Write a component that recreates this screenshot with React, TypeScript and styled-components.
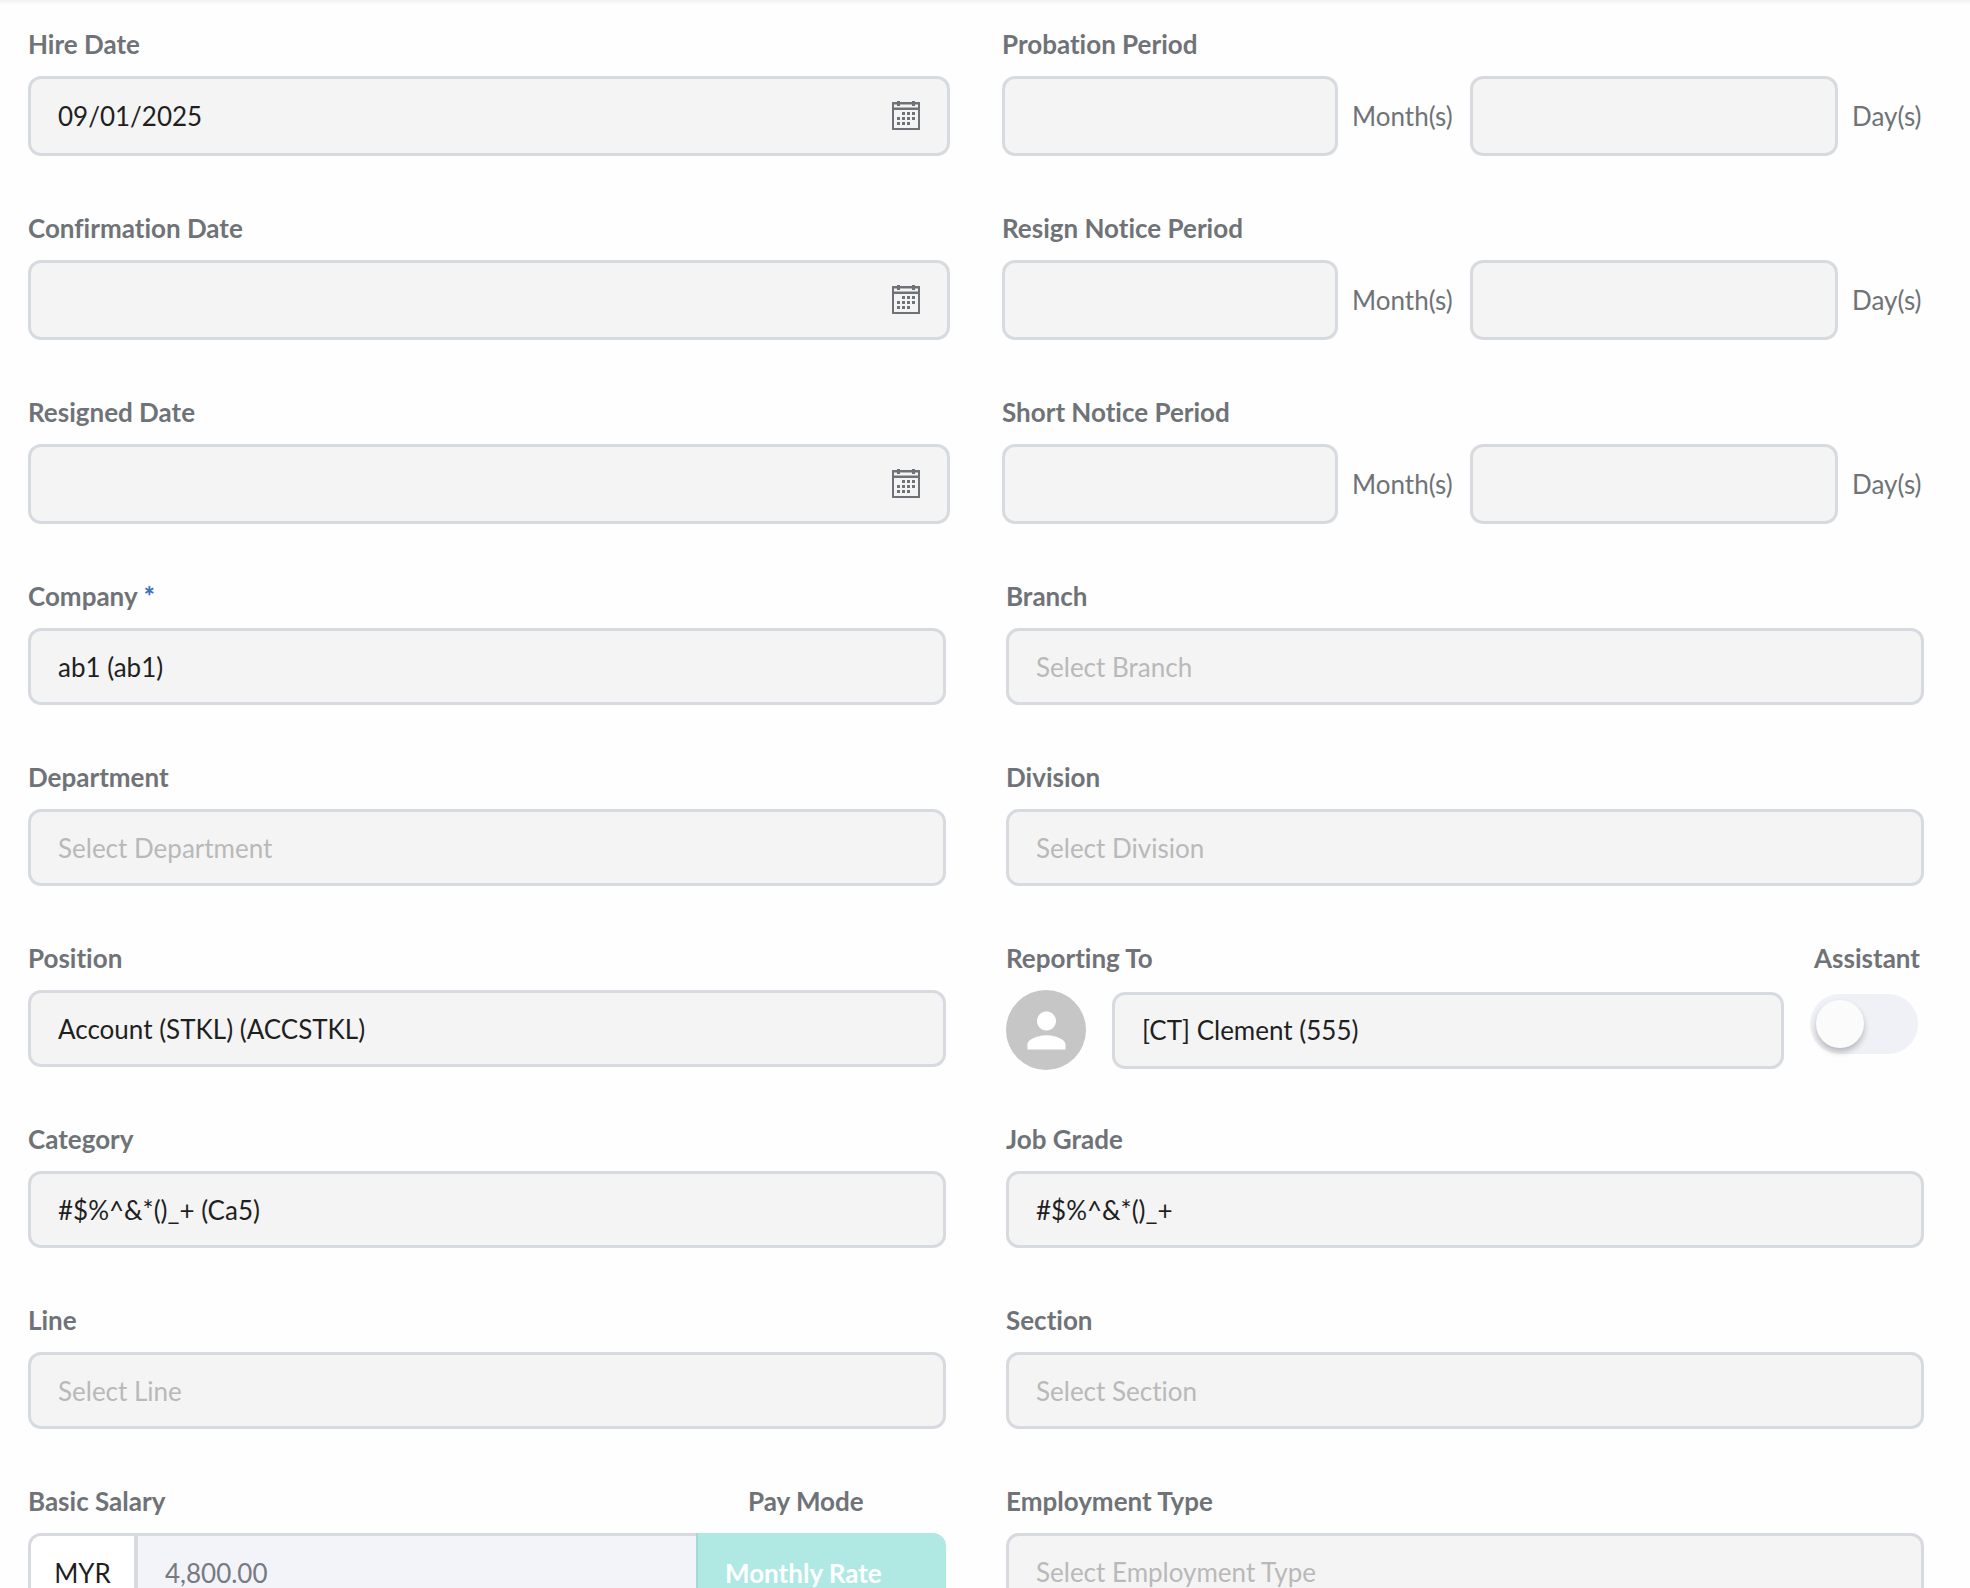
import React, { useId } from "react";
import styled, { createGlobalStyle } from "styled-components";

const GlobalStyle = createGlobalStyle`
  *, *::before, *::after { box-sizing: border-box; }
  body {
    margin: 0;
    background: #fefefe;
    font-family: Lato, "Liberation Sans", sans-serif;
    font-size: 26px;
    line-height: 32px;
    font-variant-ligatures: no-common-ligatures;
  }
  input, select, button { font: inherit; font-variant-ligatures: inherit; margin: 0; }
`;

const border = "3px solid #d7dbdf";

const Panel = styled.main`
  height: 100vh;
  overflow-y: auto;
  scrollbar-width: none;
  padding: 28px 46px 40px 28px;
  background: linear-gradient(#f1f1f1, #fefefe 5px);
`;

const FieldGrid = styled.div<{ $gap: number }>`
  display: grid;
  grid-template-columns: repeat(2, minmax(0, 1fr));
  column-gap: ${(p) => p.$gap}px;
`;

const Field = styled.div`
  min-width: 0;
  padding-bottom: 56px;
`;

const Label = styled.label`
  display: block;
  height: 48px;
  color: #6f7377;
  font-weight: 700;
  white-space: nowrap;
`;

const Required = styled.span`
  color: #3d70bf;
  font-weight: 900;
`;

const DateBox = styled.div`
  display: flex;
  align-items: center;
  height: 80px;
  padding-right: 27px;
  border: ${border};
  border-radius: 13px;
  background: #f4f4f4;
`;

const DateInput = styled.input`
  flex: 1;
  min-width: 0;
  height: 100%;
  padding: 0 27px;
  border: 0;
  outline: 0;
  background: transparent;
  color: #1f1f1f;
`;

const IconButton = styled.button`
  display: flex;
  padding: 0;
  border: 0;
  background: transparent;
  color: #6f7377;
`;

const PeriodRow = styled.div`
  display: grid;
  grid-template-columns: minmax(0, 21fr) 104px minmax(0, 23fr) 72px;
  column-gap: 14px;
  align-items: center;
`;

const PeriodInput = styled.input`
  width: 100%;
  height: 80px;
  padding: 0 27px;
  border: ${border};
  border-radius: 13px;
  outline: 0;
  background: #f4f4f4;
  color: #1f1f1f;
`;

const Unit = styled.span`
  color: #6f7377;
  white-space: nowrap;
`;

const Select = styled.select<{ $empty?: boolean }>`
  display: block;
  appearance: none;
  width: 100%;
  height: 77px;
  padding: 0 27px;
  border: ${border};
  border-radius: 13px;
  outline: 0;
  background: #f4f4f4;
  color: ${(p) => (p.$empty ? "#b9b9b9" : "#1f1f1f")};
`;

const ReportingGrid = styled.div`
  display: grid;
  grid-template-columns: 80px minmax(0, 1fr) 114px;
  column-gap: 26px;
  align-items: center;
  margin-bottom: -3px;
`;

const ReportingLabel = styled(Label)`
  grid-column: 1 / 3;
`;

const AssistantLabel = styled(Label)`
  text-align: center;
`;

const Avatar = styled.div`
  display: grid;
  place-items: center;
  width: 80px;
  height: 80px;
  border-radius: 50%;
  background: #c6c6c6;
  color: #fff;
`;

const Switch = styled.input`
  appearance: none;
  align-self: start;
  display: flex;
  align-items: center;
  width: 108px;
  height: 60px;
  margin: 4px 0 0;
  padding: 6px;
  border-radius: 30px;
  background: #f0f1f6;

  &::before {
    content: "";
    width: 48px;
    height: 48px;
    border-radius: 50%;
    background: #fbfbfb;
    box-shadow: 0 4px 6px rgba(0, 0, 0, 0.24);
  }

  &:checked { justify-content: flex-end; background: #b0e8e4; }
`;

const SalaryGrid = styled.div`
  display: grid;
  grid-template-columns: minmax(0, 1fr) 250px;
`;

const PayLabel = styled(Label)`
  padding-left: 52px;
`;

const SalaryBox = styled.div`
  display: flex;
  height: 80px;
  border: ${border};
  border-right: 0;
  border-radius: 13px 0 0 13px;
  background: #f3f4f9;
  overflow: hidden;
`;

const Currency = styled.span`
  display: grid;
  place-items: center;
  width: 107px;
  border-right: 4px solid #d7dbdf;
  background: #fff;
  color: #1f1f1f;
`;

const SalaryInput = styled.input`
  flex: 1;
  min-width: 0;
  padding: 0 27px;
  border: 0;
  outline: 0;
  background: transparent;
  color: #777a80;
`;

const PaySelect = styled.select`
  appearance: none;
  width: 100%;
  height: 80px;
  padding: 0 27px;
  border: 0;
  border-left: 2px solid #a5d9d8;
  border-radius: 0 13px 13px 0;
  outline: 0;
  background: #b0e8e4;
  color: #fff;
  font-weight: 700;
`;

function CalendarIcon() {
  const dots = [
    [11, 12], [16, 12], [21, 12],
    [6, 17], [11, 17], [16, 17], [21, 17],
    [6, 22], [11, 22], [16, 22],
  ];
  return (
    <svg width="28" height="30" viewBox="0 0 28 30" fill="currentColor" aria-hidden="true">
      <path d="M0 1h28v28H0zM2 3.500v3h24v-3zM2 9v18h24V9z" fillRule="evenodd" />
      <path d="M5 0h3v5H5zM20 0h3v5h-3z" />
      {dots.map(([x, y]) => (
        <rect key={`${x}-${y}`} x={x - 1} y={y - 1} width="3" height="3" />
      ))}
    </svg>
  );
}

function PersonIcon() {
  return (
    <svg width="57" height="57" viewBox="0 0 24 24" fill="currentColor" aria-hidden="true">
      <path d="M12 12c2.210 0 4-1.790 4-4s-1.790-4-4-4-4 1.790-4 4 1.790 4 4 4zm0 2c-2.670 0-8 1.340-8 4v2h16v-2c0-2.660-5.330-4-8-4z" />
    </svg>
  );
}

function DateField({ label, value = "" }: { label: string; value?: string }) {
  const id = useId();
  return (
    <Field>
      <Label htmlFor={id}>{label}</Label>
      <DateBox>
        <DateInput id={id} defaultValue={value} readOnly />
        <IconButton type="button" aria-label={`Open ${label} calendar`}>
          <CalendarIcon />
        </IconButton>
      </DateBox>
    </Field>
  );
}

function PeriodField({ label }: { label: string }) {
  const id = useId();
  return (
    <Field>
      <Label htmlFor={id}>{label}</Label>
      <PeriodRow>
        <PeriodInput id={id} readOnly />
        <Unit>Month(s)</Unit>
        <PeriodInput aria-label={`${label} days`} readOnly />
        <Unit>Day(s)</Unit>
      </PeriodRow>
    </Field>
  );
}

interface SelectFieldProps {
  label: string;
  value?: string;
  required?: boolean;
}

function SelectField({ label, value, required }: SelectFieldProps) {
  const id = useId();
  return (
    <Field>
      <Label htmlFor={id}>
        {label}
        {required && <Required> *</Required>}
      </Label>
      <Select id={id} $empty={!value}>
        <option>{value ?? `Select ${label}`}</option>
      </Select>
    </Field>
  );
}

function ReportingField() {
  return (
    <Field>
      <ReportingGrid>
        <ReportingLabel htmlFor="reporting-to">Reporting To</ReportingLabel>
        <AssistantLabel htmlFor="assistant">Assistant</AssistantLabel>
        <Avatar>
          <PersonIcon />
        </Avatar>
        <Select id="reporting-to">
          <option>[CT] Clement (555)</option>
        </Select>
        <Switch id="assistant" type="checkbox" role="switch" />
      </ReportingGrid>
    </Field>
  );
}

function SalaryField() {
  return (
    <Field>
      <SalaryGrid>
        <Label htmlFor="salary">Basic Salary</Label>
        <PayLabel htmlFor="pay-mode">Pay Mode</PayLabel>
        <SalaryBox>
          <Currency>MYR</Currency>
          <SalaryInput id="salary" defaultValue="4,800.00" readOnly />
        </SalaryBox>
        <PaySelect id="pay-mode">
          <option>Monthly Rate</option>
        </PaySelect>
      </SalaryGrid>
    </Field>
  );
}

export default function App() {
  return (
    <>
      <GlobalStyle />
      <Panel>
        <FieldGrid $gap={52}>
          <DateField label="Hire Date" value="09/01/2025" />
          <PeriodField label="Probation Period" />
          <DateField label="Confirmation Date" />
          <PeriodField label="Resign Notice Period" />
          <DateField label="Resigned Date" />
          <PeriodField label="Short Notice Period" />
        </FieldGrid>
        <FieldGrid $gap={60}>
          <SelectField label="Company" value="ab1 (ab1)" required />
          <SelectField label="Branch" />
          <SelectField label="Department" />
          <SelectField label="Division" />
          <SelectField label="Position" value="Account (STKL) (ACCSTKL)" />
          <ReportingField />
          <SelectField label="Category" value="#$%^&*()_+ (Ca5)" />
          <SelectField label="Job Grade" value="#$%^&*()_+" />
          <SelectField label="Line" />
          <SelectField label="Section" />
          <SalaryField />
          <SelectField label="Employment Type" />
        </FieldGrid>
      </Panel>
    </>
  );
}
